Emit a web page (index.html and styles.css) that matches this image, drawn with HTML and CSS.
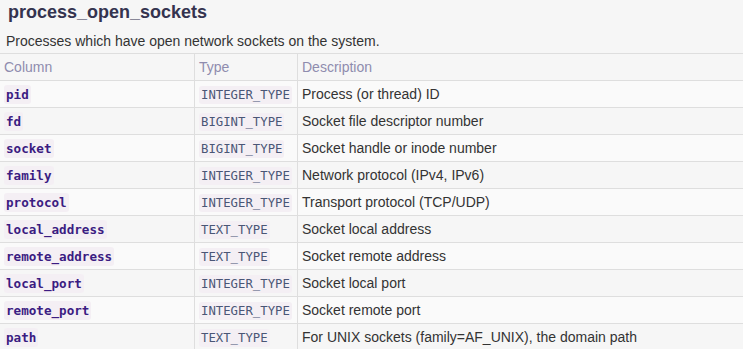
FILE: index.html
```html
<!DOCTYPE html>
<html lang="en">
<head>
  <meta charset="UTF-8" />
  <title>process_open_sockets</title>
  <link rel="stylesheet" href="styles.css">
</head>
<body>

  <h2 class="titulo">process_open_sockets</h2>
  <p class="bajada">Processes which have open network sockets on the system.</p>

  <table class="tabla">
    <thead>
      <tr>
        <th class="col-nombre">Column</th>
        <th class="col-tipo">Type</th>
        <th>Description</th>
      </tr>
    </thead>
    <tbody>
      <tr>
        <td><code class="nombre">pid</code></td>
        <td><code class="tipo">INTEGER_TYPE</code></td>
        <td>Process (or thread) ID</td>
      </tr>
      <tr>
        <td><code class="nombre">fd</code></td>
        <td><code class="tipo">BIGINT_TYPE</code></td>
        <td>Socket file descriptor number</td>
      </tr>
      <tr>
        <td><code class="nombre">socket</code></td>
        <td><code class="tipo">BIGINT_TYPE</code></td>
        <td>Socket handle or inode number</td>
      </tr>
      <tr>
        <td><code class="nombre">family</code></td>
        <td><code class="tipo">INTEGER_TYPE</code></td>
        <td>Network protocol (IPv4, IPv6)</td>
      </tr>
      <tr>
        <td><code class="nombre">protocol</code></td>
        <td><code class="tipo">INTEGER_TYPE</code></td>
        <td>Transport protocol (TCP/UDP)</td>
      </tr>
      <tr>
        <td><code class="nombre">local_address</code></td>
        <td><code class="tipo">TEXT_TYPE</code></td>
        <td>Socket local address</td>
      </tr>
      <tr>
        <td><code class="nombre">remote_address</code></td>
        <td><code class="tipo">TEXT_TYPE</code></td>
        <td>Socket remote address</td>
      </tr>
      <tr>
        <td><code class="nombre">local_port</code></td>
        <td><code class="tipo">INTEGER_TYPE</code></td>
        <td>Socket local port</td>
      </tr>
      <tr>
        <td><code class="nombre">remote_port</code></td>
        <td><code class="tipo">INTEGER_TYPE</code></td>
        <td>Socket remote port</td>
      </tr>
      <tr>
        <td><code class="nombre">path</code></td>
        <td><code class="tipo">TEXT_TYPE</code></td>
        <td>For UNIX sockets (family=AF_UNIX), the domain path</td>
      </tr>
    </tbody>
  </table>

</body>
</html>
```

FILE: styles.css
```css
body {
  margin: 0;
  padding: 0;
  background: #f6f6f6;
  font-family: 'Liberation Sans', Arial, sans-serif;
  color: #333;
  overflow: hidden;
}

.titulo {
  margin: 0;
  padding: 1px 0 0 8px;
  height: 30px;
  font-size: 18px;
  line-height: 22px;
  font-weight: bold;
  color: #34334f;
}

.bajada {
  margin: 0;
  padding: 0 0 0 6px;
  height: 22px;
  font-size: 14px;
  line-height: 20px;
  color: #333;
}

.tabla {
  border-collapse: collapse;
  width: 760px;
  font-size: 14px;
}

.tabla th,
.tabla td {
  height: 26px;
  padding: 0 4px;
  text-align: left;
  vertical-align: middle;
  border-top: 1px solid #dedede;
  border-bottom: 1px solid #dedede;
  border-left: 1px solid #dedede;
}

.tabla th:first-child,
.tabla td:first-child {
  border-left: none;
}

.tabla th {
  font-weight: normal;
  color: #8f8cae;
}

.col-nombre {
  width: 186px;
}

.col-tipo {
  width: 94px;
}

.tabla tbody tr:nth-child(odd) {
  background: #fafafa;
}

.tabla td {
  color: #333;
}

code {
  font-family: 'DejaVu Sans Mono', 'Liberation Mono', monospace;
  font-size: 12.3px;
  padding: 2px 2px;
  border-radius: 3px;
  background: #f4eff4;
}

.nombre {
  font-size: 12.6px;
  font-weight: bold;
  color: #3b1c82;
}

.tipo {
  color: #4a5676;
}
```
